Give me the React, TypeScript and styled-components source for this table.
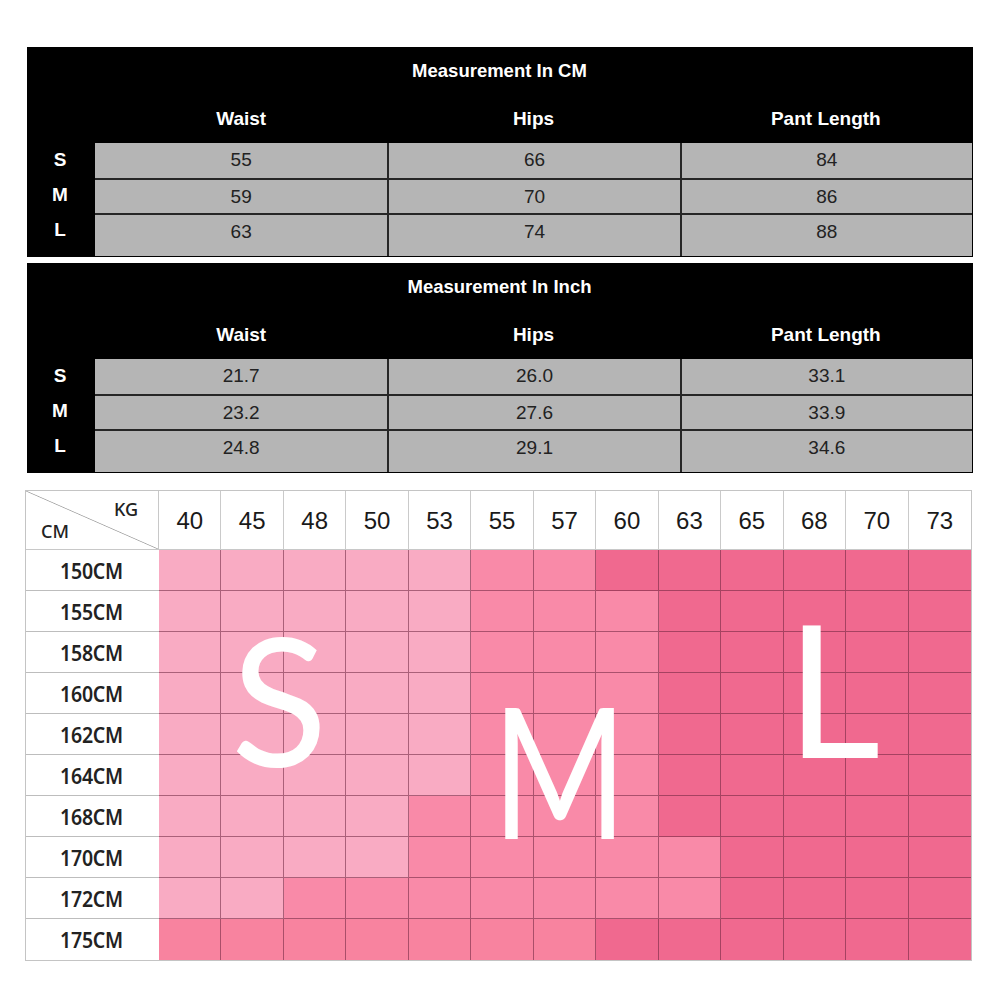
import React from 'react';
import styled, { createGlobalStyle } from 'styled-components';

const GlobalStyle = createGlobalStyle`
  html, body { margin: 0; padding: 0; background: #fff; }
  body { font-family: "Liberation Sans", Arial, sans-serif; }
  * { box-sizing: border-box; }
`;

const Page = styled.div`
  width: 1000px;
  height: 1000px;
  padding: 47px 0 0 27px;
  display: flex;
  flex-direction: column;
  background: #fff;
`;

const Table = styled.section`
  width: 946px;
  height: 210px;
  background: #000;
  display: flex;
  flex-direction: column;
  padding: 0 1px 1px 0;
  & + & { margin-top: 6px; }
`;

const Title = styled.div`
  height: 48px;
  display: flex;
  align-items: center;
  justify-content: center;
  color: #fff;
  font-weight: 700;
  font-size: 18.5px;
`;

const HeadRow = styled.div`
  height: 48px;
  display: grid;
  grid-template-columns: 68px repeat(3, 1fr);
  align-items: center;
`;

const HeadCell = styled.div`
  color: #fff;
  font-weight: 700;
  font-size: 19px;
  text-align: center;
`;

const DataRow = styled.div<{ $last?: boolean }>`
  display: grid;
  grid-template-columns: 68px repeat(3, 1fr);
  height: ${p => (p.$last ? 43 : 35)}px;
`;

const SizeLabel = styled.div`
  color: #fff;
  font-weight: 700;
  font-size: 19px;
  line-height: 33px;
  text-align: center;
  padding-right: 2px;
`;

const Value = styled.div<{ $first?: boolean; $top?: boolean }>`
  background: #b5b5b5;
  color: #222;
  font-size: 19px;
  line-height: 33px;
  text-align: center;
  border-top: ${p => (p.$top ? 'none' : '2px solid #262626')};
  border-left: ${p => (p.$first ? 'none' : '2px solid #262626')};
`;

const Chart = styled.div`
  position: relative;
  margin-top: 17px;
  margin-left: -2px;
  width: 947px;
  display: grid;
  grid-template-columns: 133px repeat(13, 1fr);
  grid-template-rows: 59px repeat(10, 41px);
  border: 1px solid #c4c4c4;
  background: #fff;
`;

const Corner = styled.div`
  position: relative;
  display: flex;
  flex-direction: column;
  justify-content: space-between;
  padding: 9px 20px 9px 15px;
  border-right: 1px solid #c8c8c8;
  border-bottom: 1px solid #c8c8c8;
  background: linear-gradient(
    to top right,
    transparent calc(50% - 0.8px),
    #a9a9a9 50%,
    transparent calc(50% + 0.8px)
  );
  font-family: "Noto Sans", sans-serif;
  font-weight: 500;
  font-size: 18px;
  color: #222;
`;

const CornerTag = styled.span<{ $end?: boolean }>`
  align-self: ${p => (p.$end ? 'flex-end' : 'flex-start')};
  line-height: 18px;
`;

const WeightCell = styled.div<{ $lastCol?: boolean }>`
  display: flex;
  align-items: center;
  justify-content: center;
  padding-top: 2px;
  font-size: 24px;
  color: #1a1a1a;
  border-right: ${p => (p.$lastCol ? 'none' : '1px solid #cacaca')};
  border-bottom: 1px solid #c8c8c8;
`;

const HeightCell = styled.div<{ $lastRow?: boolean }>`
  display: flex;
  align-items: center;
  justify-content: center;
  padding-right: 2px;
  font-family: "Noto Sans", sans-serif;
  font-weight: 600;
  font-size: 19.5px;
  color: #222;
  border-bottom: ${p => (p.$lastRow ? 'none' : '1px solid #bdbdbd')};
  span { display: inline-block; transform: scaleY(1.14); letter-spacing: -0.2px; }
`;

type Tone = 'l' | 'm' | 'd' | 'x';

const toneColor: Record<Tone, string> = {
  l: '#f9abc3',
  m: '#f98aa8',
  d: '#f0698f',
  x: '#f8839f',
};

const PinkCell = styled.div<{ $tone: Tone; $lastCol?: boolean; $lastRow?: boolean }>`
  background: ${p => toneColor[p.$tone]};
  border-right: ${p => (p.$lastCol ? 'none' : '1px solid rgba(105, 35, 60, 0.55)')};
  border-bottom: ${p => (p.$lastRow ? 'none' : '1px solid rgba(105, 35, 60, 0.55)')};
`;

const BigLetter = styled.span<{ $squeeze?: number }>`
  position: absolute;
  font-family: Lato, "Open Sans", sans-serif;
  font-weight: 400;
  line-height: 1;
  color: #fff;
  pointer-events: none;
  transform-origin: left top;
  transform: scaleX(${p => p.$squeeze ?? 1});
`;

const BigS = styled(BigLetter)`
  left: 205px;
  top: 118px;
  font-size: 178px;
`;
const BigM = styled(BigLetter)`
  left: 466px;
  top: 187px;
  font-size: 182px;
`;
const BigL = styled(BigLetter)`
  left: 760px;
  top: 104px;
  font-size: 184px;
`;

const tables = [
  {
    title: 'Measurement In CM',
    rows: [
      ['S', '55', '66', '84'],
      ['M', '59', '70', '86'],
      ['L', '63', '74', '88'],
    ],
  },
  {
    title: 'Measurement In Inch',
    rows: [
      ['S', '21.7', '26.0', '33.1'],
      ['M', '23.2', '27.6', '33.9'],
      ['L', '24.8', '29.1', '34.6'],
    ],
  },
];

const weights = ['40', '45', '48', '50', '53', '55', '57', '60', '63', '65', '68', '70', '73'];
const heights = ['150CM', '155CM', '158CM', '160CM', '162CM', '164CM', '168CM', '170CM', '172CM', '175CM'];

const zones: string[] = [
  'lllllmmdddddd',
  'lllllmmmddddd',
  'lllllmmmddddd',
  'lllllmmmddddd',
  'lllllmmmddddd',
  'lllllmmmddddd',
  'llllmmmmddddd',
  'llllmmmmmdddd',
  'llmmmmmmmdddd',
  'xxxxxxxdddddd',
];

function MeasureTable({ title, rows }: { title: string; rows: string[][] }) {
  return (
    <Table>
      <Title>{title}</Title>
      <HeadRow>
        <span />
        <HeadCell>Waist</HeadCell>
        <HeadCell>Hips</HeadCell>
        <HeadCell>Pant Length</HeadCell>
      </HeadRow>
      {rows.map((r, i) => (
        <DataRow key={r[0]} $last={i === rows.length - 1}>
          <SizeLabel>{r[0]}</SizeLabel>
          {r.slice(1).map((v, j) => (
            <Value key={j} $first={j === 0} $top={i === 0}>
              {v}
            </Value>
          ))}
        </DataRow>
      ))}
    </Table>
  );
}

export default function App() {
  return (
    <>
      <GlobalStyle />
      <Page>
        {tables.map(t => (
          <MeasureTable key={t.title} title={t.title} rows={t.rows} />
        ))}
        <Chart>
          <Corner>
            <CornerTag $end>KG</CornerTag>
            <CornerTag>CM</CornerTag>
          </Corner>
          {weights.map((w, i) => (
            <WeightCell key={w} $lastCol={i === weights.length - 1}>
              {w}
            </WeightCell>
          ))}
          {heights.map((h, r) => (
            <React.Fragment key={h}>
              <HeightCell $lastRow={r === heights.length - 1}>
                <span>{h}</span>
              </HeightCell>
              {zones[r].split('').map((z, c) => (
                <PinkCell
                  key={c}
                  $tone={z as Tone}
                  $lastCol={c === 12}
                  $lastRow={r === heights.length - 1}
                />
              ))}
            </React.Fragment>
          ))}
          <BigS>S</BigS>
          <BigM $squeeze={0.8}>M</BigM>
          <BigL>L</BigL>
        </Chart>
      </Page>
    </>
  );
}
